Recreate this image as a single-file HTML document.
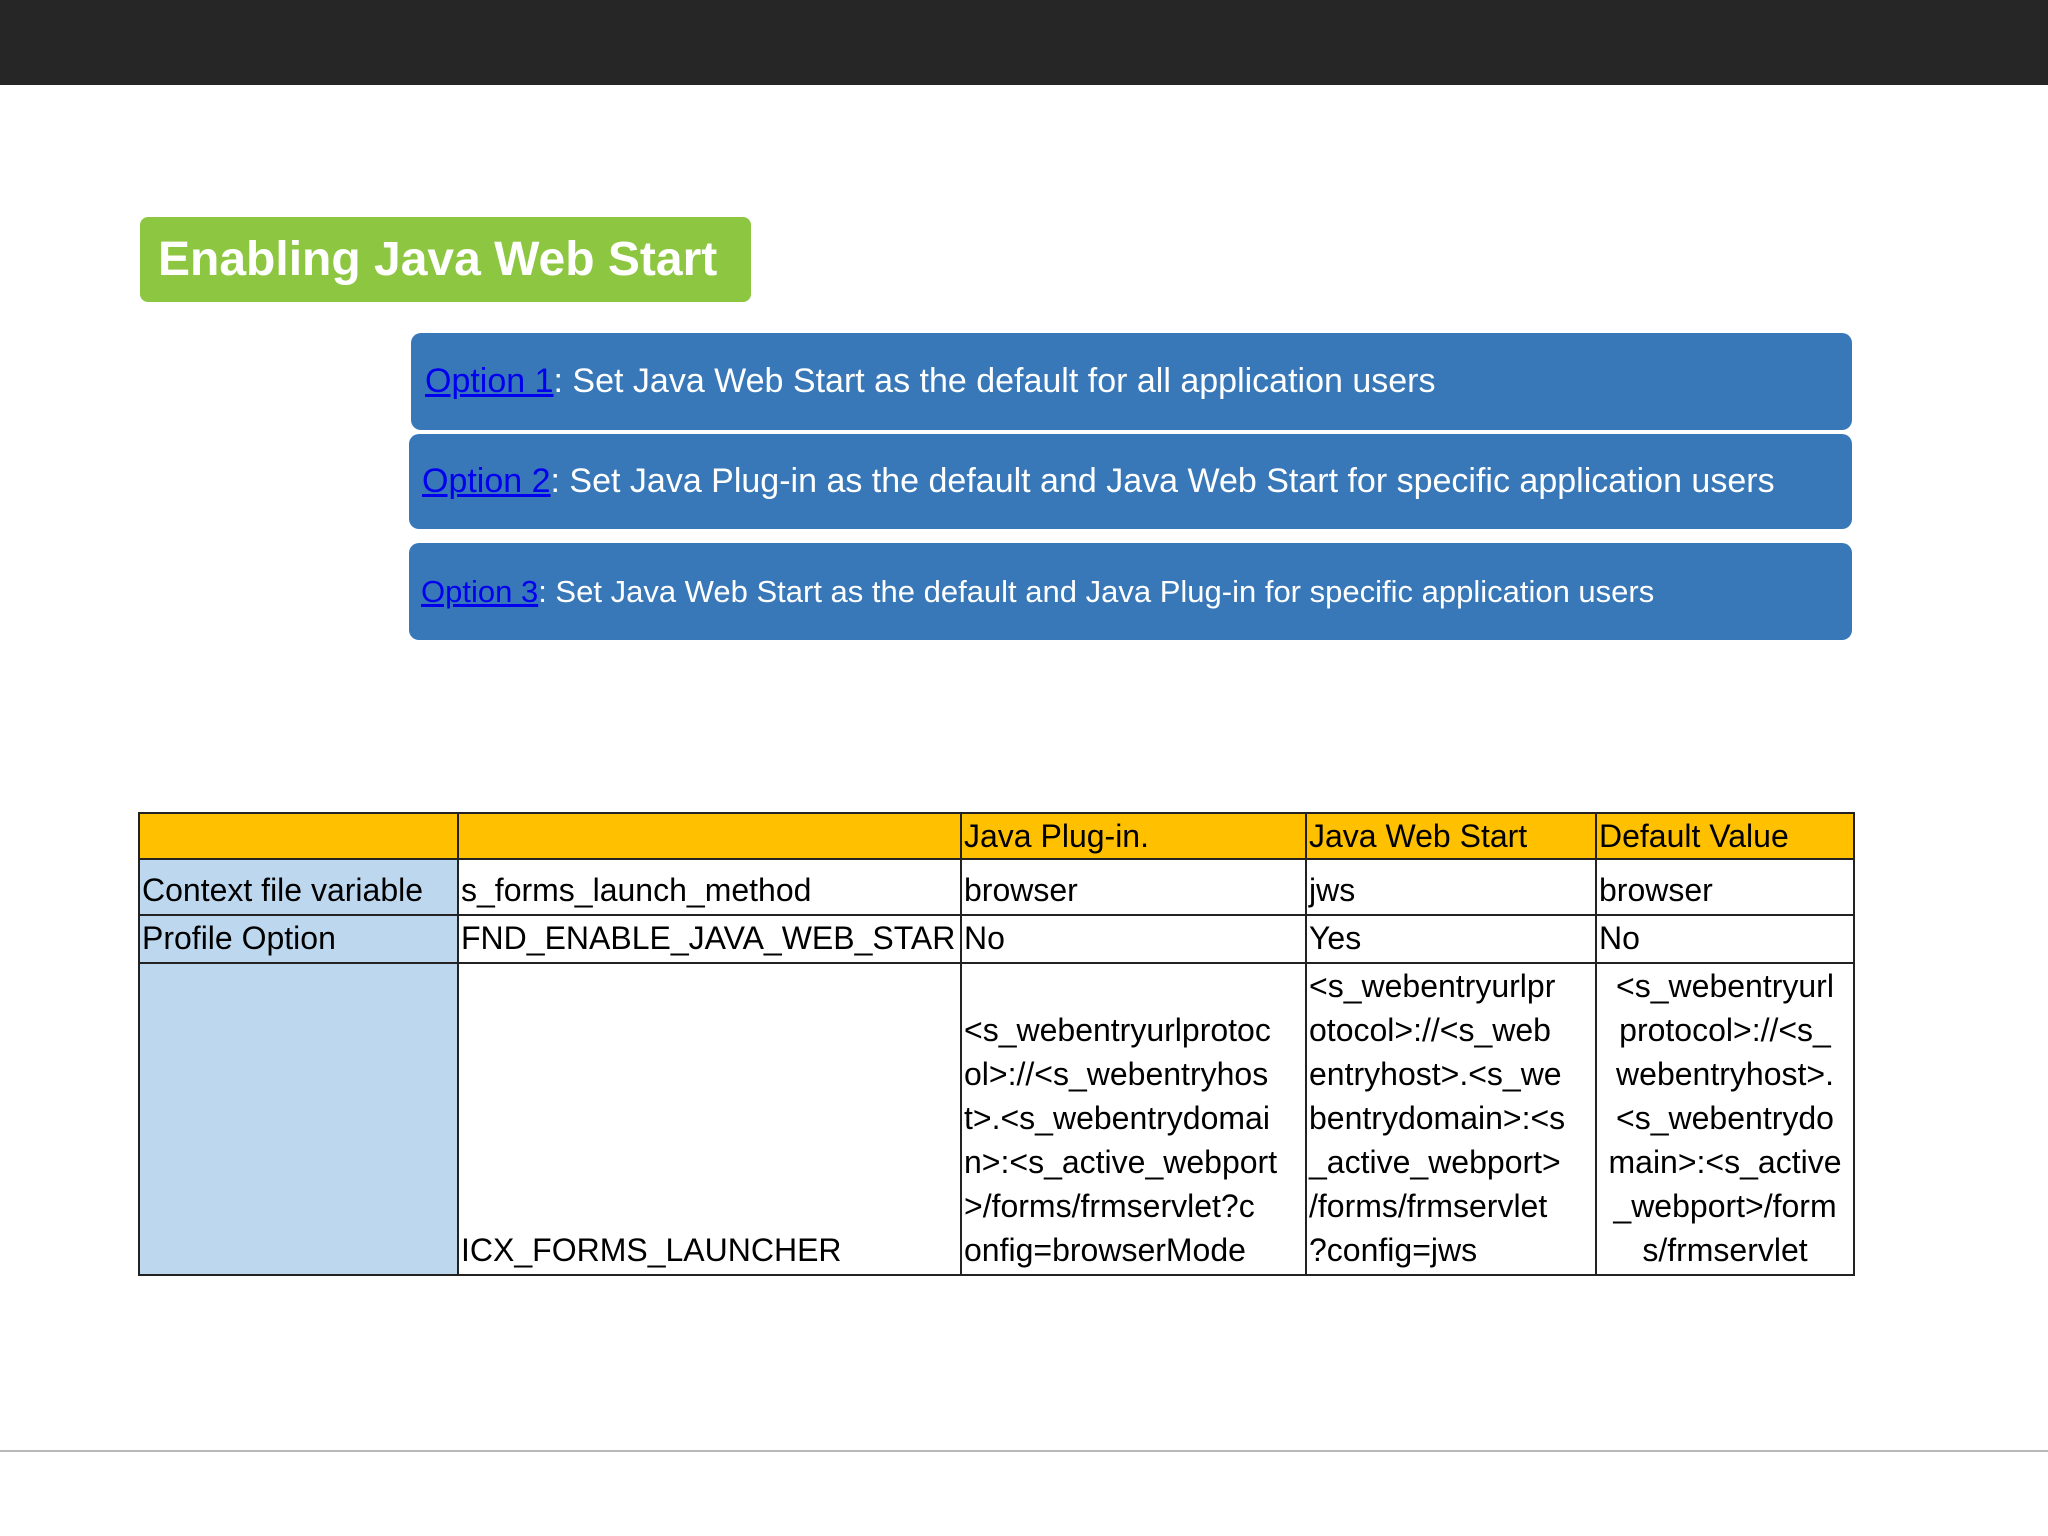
<!DOCTYPE html>
<html><head><meta charset="utf-8"><style>
body{margin:0;width:2048px;height:1536px;background:#fff;position:relative;overflow:hidden;font-family:"Liberation Sans",Arial,sans-serif}
.top{position:absolute;left:0;top:0;width:2048px;height:85px;background:#262626}
.title{position:absolute;left:140px;top:217px;width:611px;height:85px;background:#8dc641;border-radius:8px;color:#fff;font-weight:bold;font-size:48px;line-height:85px;box-sizing:border-box;padding-left:18px}
.opt{position:absolute;background:#3878b8;border-radius:10px;color:#fff;box-sizing:border-box;white-space:nowrap}
.opt a{color:#0000ee;text-decoration:underline}
table{position:absolute;left:138px;top:812px;border-collapse:collapse;font-size:32px;color:#000}
td{border:2px solid #222;padding:0 2px;white-space:nowrap;line-height:44px;vertical-align:bottom}
tr.h td{background:#ffc000;height:44px}
td.b{background:#bdd7ee}
tr.r td{padding-bottom:2px}
.line{position:absolute;left:0;top:1450px;width:2048px;height:2px;background:#b8b8b8}
</style></head><body>
<div class="top"></div>
<div class="title">Enabling Java Web Start</div>
<div class="opt" style="left:411px;top:333px;width:1441px;height:97px;font-size:34px;line-height:97px;padding-left:14px"><a>Option 1</a>: Set Java Web Start as the default for all application users</div>
<div class="opt" style="left:409px;top:434px;width:1443px;height:95px;font-size:34px;line-height:95px;padding-left:13px"><a>Option 2</a>: Set Java Plug-in as the default and Java Web Start for specific application users</div>
<div class="opt" style="left:409px;top:543px;width:1443px;height:97px;font-size:31px;line-height:97px;padding-left:12px"><a>Option 3</a>: Set Java Web Start as the default and Java Plug-in for specific application users</div>
<table>
<colgroup><col style="width:319px"><col style="width:503px"><col style="width:345px"><col style="width:290px"><col style="width:258px"></colgroup>
<tr class="h"><td></td><td></td><td>Java Plug-in.</td><td>Java Web Start</td><td>Default Value</td></tr>
<tr class="r" style="height:56px"><td class="b">Context file variable</td><td>s_forms_launch_method</td><td>browser</td><td>jws</td><td>browser</td></tr>
<tr class="r" style="height:47px"><td class="b">Profile Option</td><td>FND_ENABLE_JAVA_WEB_STAR</td><td>No</td><td>Yes</td><td>No</td></tr>
<tr class="r" style="height:312px"><td class="b"></td><td>ICX_FORMS_LAUNCHER</td>
<td>&lt;s_webentryurlprotoc<br>ol&gt;://&lt;s_webentryhos<br>t&gt;.&lt;s_webentrydomai<br>n&gt;:&lt;s_active_webport<br>&gt;/forms/frmservlet?c<br>onfig=browserMode</td>
<td>&lt;s_webentryurlpr<br>otocol&gt;://&lt;s_web<br>entryhost&gt;.&lt;s_we<br>bentrydomain&gt;:&lt;s<br>_active_webport&gt;<br>/forms/frmservlet<br>?config=jws</td>
<td style="text-align:center">&lt;s_webentryurl<br>protocol&gt;://&lt;s_<br>webentryhost&gt;.<br>&lt;s_webentrydo<br>main&gt;:&lt;s_active<br>_webport&gt;/form<br>s/frmservlet</td></tr>
</table>
<div class="line"></div>
</body></html>
